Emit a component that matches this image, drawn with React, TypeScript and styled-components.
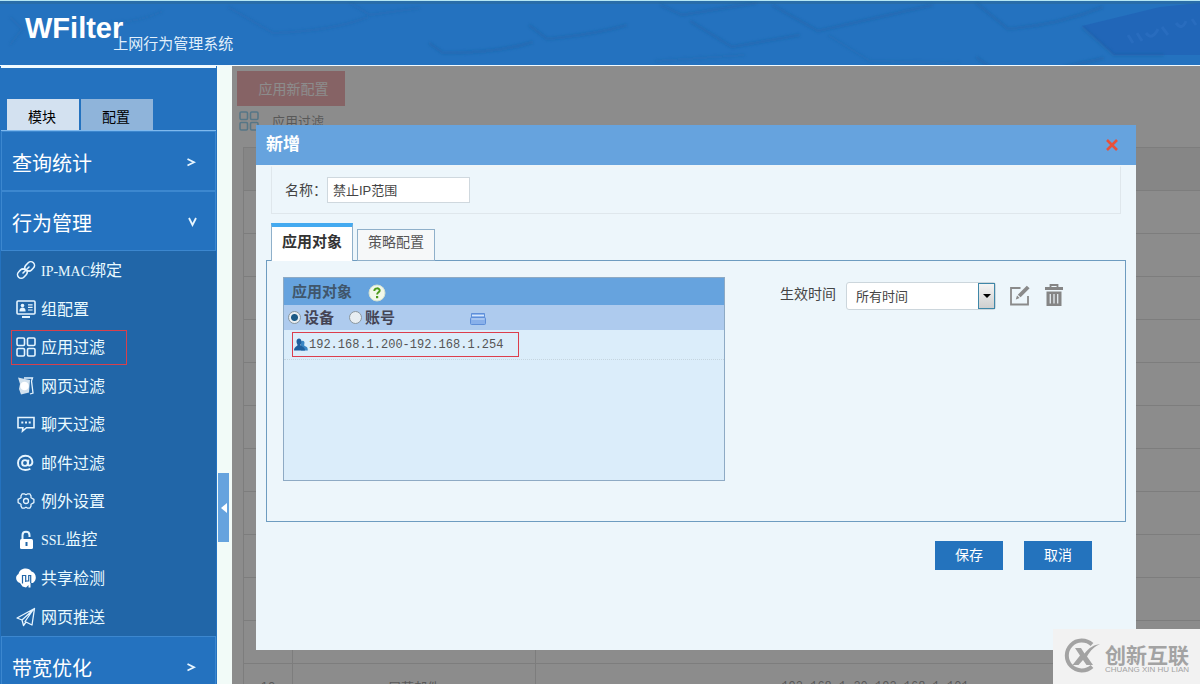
import React from "react";
import styled, { createGlobalStyle, css } from "styled-components";

const sans = `"Liberation Sans", "Noto Sans CJK SC", sans-serif`;

const GlobalStyle = createGlobalStyle`
  *, *::before, *::after { box-sizing: border-box; }
  body { margin: 0; font-family: ${sans}; font-size: 14px; color: #444; }
  button, input, select { font-family: inherit; margin: 0; border-radius: 0; }
  button { cursor: pointer; }
  h1, h2, h3, p, ul { margin: 0; padding: 0; }
`;

/* ---------- page frame ---------- */

const Page = styled.div`
  height: 100vh;
  display: flex;
  flex-direction: column;
  overflow: hidden;
  background: #f2fbf8;
`;

const Header = styled.header`
  position: relative;
  flex: none;
  height: 66px;
  border-top: 1px solid #b4e6f4;
  border-bottom: 1px solid #f2fbff;
  background: #2472bf;
  overflow: hidden;
`;

const HeaderArt = styled.svg`
  position: absolute;
  inset: 0;
  width: 100%;
  height: 100%;
`;

const Brand = styled.div`
  position: relative;
  display: flex;
  align-items: flex-start;
  padding: 10px 0 0 25px;
  color: #fff;
  white-space: nowrap;
`;

const BrandName = styled.h1`
  font-size: 29px;
  line-height: 34px;
  font-weight: bold;
`;

const BrandSub = styled.p`
  margin: 23px 0 0 -10px;
  font-size: 15px;
  line-height: 20px;
  color: #e2f0fc;
`;

const Body = styled.div`
  flex: 1;
  min-height: 0;
  display: flex;
`;

/* ---------- sidebar ---------- */

const Sidebar = styled.nav`
  flex: none;
  width: 217px;
  padding: 0 1px;
  overflow: hidden;
  background: #2472bf;
`;

const SideTabs = styled.div`
  display: flex;
  align-items: flex-end;
  gap: 2px;
  height: 65px;
  padding-left: 6px;
  border-top: 2px solid #f2fbff;
  border-bottom: 1px solid #7fb9ee;
`;

const SideTab = styled.button<{ $active?: boolean }>`
  width: 72px;
  height: 31px;
  padding: 4px 2px 0 0;
  border: 0;
  font-size: 14px;
  line-height: 20px;
  color: #000;
  background: ${(p) => (p.$active ? "#d3e1f0" : "#8fb4da")};
`;

const Section = styled.button`
  width: 100%;
  height: 60px;
  display: flex;
  align-items: center;
  justify-content: space-between;
  padding: 6px 18px 0 10px;
  border: 1px solid #3c87cf;
  color: #fff;
  background: #2472bf;
  font-size: 20px;
  line-height: 28px;

  svg {
    margin-bottom: 5px;
  }
`;

const Menu = styled.ul`
  display: grid;
  grid-template-rows: repeat(5, 38px 39px);
  align-items: center;
  list-style: none;
  background: #2166a8;
`;

const MenuLink = styled.a<{ $marked?: boolean }>`
  display: flex;
  align-items: center;
  gap: 5px;
  width: 116px;
  height: 35px;
  margin-left: 10px;
  padding-left: 4px;
  border: 1px solid ${(p) => (p.$marked ? "#d8404c" : "transparent")};
  color: #eafaff;
  font-size: 16px;
  line-height: 24px;
  text-decoration: none;
  white-space: nowrap;

  span {
    padding-top: 2px;
  }
`;

const Latin = styled.span`
  font-family: "Liberation Serif", serif;
  font-size: 14px;
`;

const Gutter = styled.div`
  flex: none;
  width: 15px;
  padding: 407px 3px 0 1px;
  background: #f2fbf8;
`;

const CollapseHandle = styled.button`
  display: flex;
  align-items: center;
  justify-content: flex-end;
  width: 11px;
  height: 69px;
  padding: 0 2px;
  border: 0;
  background: #66a3de;
`;

/* ---------- content behind the dialog ---------- */

const Main = styled.main`
  position: relative;
  flex: 1;
  min-width: 0;
  overflow: hidden;
  padding: 5px 0 0 5px;
  background: #fff;
`;

const ApplyButton = styled.button`
  display: block;
  width: 108px;
  height: 35px;
  padding: 0 0 2px 5px;
  border: 0;
  color: #fff;
  background: #e65e66;
  font-size: 14px;
`;

const PageTitle = styled.div`
  display: flex;
  align-items: center;
  gap: 13px;
  padding: 4px 0 15px 2px;
  font-size: 13px;
  line-height: 20px;
  color: #333;

  h2 {
    padding-top: 2px;
    font: inherit;
  }
`;

const RuleTable = styled.table`
  width: calc(100% - 6px + 15px);
  margin-left: 6px;
  border-collapse: collapse;
  table-layout: fixed;
  font-size: 13px;
  color: #333;

  th,
  td {
    height: 43px;
    padding: 2px 0 0;
    border: 1px solid #c4c4c4;
    text-align: center;
  }
  th {
    background: #e8e8e8;
  }
`;

const Mono = styled.span`
  font-family: "Liberation Mono", "Noto Sans CJK SC", monospace;
  font-size: 12px;
`;

/* ---------- dialog ---------- */

const Overlay = styled.div`
  position: absolute;
  inset: 0;
  padding: 59px 64px 0 24px;
  background: rgba(102, 102, 102, 0.75);
`;

const Dialog = styled.section`
  min-height: 525px;
  background: #edf6fb;
`;

const DialogHead = styled.header`
  display: flex;
  align-items: center;
  justify-content: space-between;
  height: 40px;
  padding: 0 16px 0 10px;
  background: #66a3de;
  color: #fff;

  h2 {
    font-size: 17px;
    line-height: 24px;
  }
`;

const CloseButton = styled.button`
  display: flex;
  padding: 2px;
  border: 0;
  background: none;
`;

const DialogBody = styled.div`
  padding: 1px 10px 0;
`;

const NameRow = styled.div`
  display: flex;
  align-items: center;
  height: 48px;
  margin: 0 5px;
  padding-left: 13px;
  border: 1px solid #dfe7ec;
  border-top-color: #f2f5f5;
  line-height: 20px;
`;

const NameLabel = styled.label`
  width: 42px;
  white-space: nowrap;
`;

const NameInput = styled.input`
  width: 143px;
  height: 26px;
  padding: 0 5px 2px;
  border: 1px solid #cfd8de;
  background: #fff;
  color: #444;
  font-size: 13px;
`;

const Tabs = styled.div`
  display: flex;
  align-items: flex-end;
  gap: 4px;
  margin: 9px 5px -1px;
`;

const Tab = styled.button<{ $active?: boolean }>`
  position: relative;
  padding: 0 0 8px;
  border: 1px solid #8fb0ca;
  color: #555;
  ${(p) =>
    p.$active
      ? css`
          width: 82px;
          height: 38px;
          border-top: 4px solid #44aaf0;
          border-bottom: 0;
          background: #fff;
          color: #333;
          font-size: 15px;
          font-weight: bold;
        `
      : css`
          width: 78px;
          height: 32px;
          background: #f6f8f9;
          font-size: 14px;
        `}
`;

const Panel = styled.div`
  display: flex;
  align-items: flex-start;
  gap: 55px;
  min-height: 262px;
  padding: 16px;
  border: 1px solid #6e9cc0;
`;

const TargetBox = styled.div`
  width: 442px;
  min-height: 204px;
  border: 1px solid #8eaac4;
  background: #dbedfa;
`;

const TargetHead = styled.div`
  display: flex;
  align-items: center;
  gap: 16px;
  height: 27px;
  padding-left: 8px;
  background: #66a3de;
  color: #40566b;

  h3 {
    font-size: 15px;
    line-height: 22px;
  }
  svg {
    margin-top: 3px;
  }
`;

const TargetKinds = styled.div`
  display: flex;
  align-items: center;
  height: 25px;
  padding-left: 4px;
  background: #aecbee;
`;

const Kind = styled.label`
  display: flex;
  align-items: center;
  gap: 3px;
  width: 61px;
  color: #445;
  font-size: 15px;
  font-weight: bold;
  line-height: 22px;
`;

const Radio = styled.input`
  appearance: none;
  flex: none;
  width: 13px;
  height: 13px;
  border: 1px solid #8b979f;
  border-radius: 50%;
  background: #e8eef2;

  &:checked {
    background: radial-gradient(circle, #1c5a86 0 3px, #e8eef2 4px);
  }
`;

const FolderButton = styled.button`
  display: flex;
  margin-left: 60px;
  padding: 2px 0 0;
  border: 0;
  background: none;
`;

const TargetRow = styled.div`
  padding: 2px 8px;
  border-bottom: 1px dotted #c5d5e0;
`;

const TargetMark = styled.div`
  display: flex;
  align-items: center;
  gap: 1px;
  width: 227px;
  height: 25px;
  padding-left: 1px;
  border: 1px solid #dc3e4c;
  color: #555;
`;

const TimeRow = styled.div`
  display: flex;
  align-items: center;
  padding-top: 5px;

  label {
    margin: -5px 10px 0 0;
    line-height: 20px;
  }
`;

const SelectWrap = styled.div`
  position: relative;
  margin-right: 14px;
`;

const TimeSelect = styled.select`
  appearance: none;
  display: block;
  width: 150px;
  height: 28px;
  padding: 0 24px 0 9px;
  border: 1px solid #ccd6dc;
  border-radius: 3px;
  background: #fff;
  color: #444;
  font-size: 13px;
`;

const SelectArrow = styled.span`
  position: absolute;
  top: 1px;
  right: 1px;
  bottom: 1px;
  width: 17px;
  display: flex;
  align-items: center;
  justify-content: center;
  border: 1px solid #3f87a8;
  background: linear-gradient(#f4f4f4, #cfcfcf);
  pointer-events: none;
`;

const IconButton = styled.button`
  display: flex;
  margin-right: 15px;
  padding: 0 0 2px;
  border: 0;
  background: none;
`;

const Actions = styled.div`
  display: flex;
  justify-content: flex-end;
  gap: 21px;
  padding: 19px 34px 0;
`;

const ActionButton = styled.button`
  width: 68px;
  height: 29px;
  padding: 0 0 3px;
  border: 0;
  background: #2473bd;
  color: #fff;
  font-size: 14px;
`;

/* ---------- site mark ---------- */

const SiteMark = styled.aside`
  position: fixed;
  right: 0;
  bottom: 0;
  display: flex;
  gap: 4px;
  padding: 9px 10px 9px 11px;
  width: 147px;
  height: 55px;
  background: #f2f2f2;
  color: #a3a3a3;
  white-space: nowrap;
`;

const SiteName = styled.div`
  font-size: 21px;
  font-weight: bold;
  line-height: 36px;

  small {
    display: block;
    margin-top: -9px;
    font-size: 8px;
    font-weight: normal;
    line-height: 10px;
  }
`;

/* ---------- icons ---------- */

const Icon = ({ children }: { children: React.ReactNode }) => (
  <svg width="20" height="20" viewBox="0 0 20 20" fill="none" stroke="#e6f5ff" strokeWidth="1.6" aria-hidden="true">
    {children}
  </svg>
);

const GridShapes = () => (
  <>
    <rect x="1" y="1" width="7.5" height="7.5" rx="1.2" />
    <rect x="11.5" y="1" width="7.5" height="7.5" rx="1.2" />
    <rect x="1" y="11.5" width="7.5" height="7.5" rx="1.2" />
    <rect x="11.5" y="11.5" width="7.5" height="7.5" rx="1.2" />
  </>
);

const LinkIcon = () => (
  <Icon>
    <path
      d="M8.200 9.200l-1-.3a3.600 3.600 0 0 0-2.600 1L2.600 12a3.600 3.600 0 0 0 5.200 5.200l2.400-2.500a3.600 3.600 0 0 0 .6-4.200M11.800 10.800l1 .3a3.600 3.600 0 0 0 2.600-1L17.400 8a3.600 3.600 0 0 0-5.200-5.200L9.800 5.300a3.600 3.600 0 0 0-.6 4.200M7 13l6-6"
      strokeLinecap="round"
    />
  </Icon>
);

const GroupIcon = () => (
  <Icon>
    <rect x="1" y="2" width="18" height="13" rx="1" />
    <path d="M6 18h8" strokeWidth="2" />
    <circle cx="6.5" cy="6.5" r="1.8" fill="#e6f5ff" stroke="none" />
    <path d="M3.4 12.4c0-3 1.2-4 3.1-4s3.1 1 3.1 4z" fill="#e6f5ff" stroke="none" />
    <path d="M12 5.8h4.600M12 8.400h4.600M12 11h4.600" strokeWidth="1.2" />
  </Icon>
);

const PagesIcon = () => (
  <Icon>
    <path d="M8 2h8.500l-1 3 1.500 12-3 1" strokeWidth="1.3" />
    <path d="M2 1.500l4.500 1L14 4l-1 12.500-8 2L3 13l1-5z" fill="#d3e2ee" stroke="none" />
    <circle cx="8.500" cy="10" r="4.300" fill="#fff" stroke="none" />
  </Icon>
);

const ChatIcon = () => (
  <Icon>
    <path d="M2 3.500h16v10.200h-7.500L6.500 17l.4-3.300H2z" />
    <path d="M5.300 8.500h2M9 8.500h2M12.700 8.500h2" strokeWidth="2" />
  </Icon>
);

const AtIcon = () => (
  <Icon>
    <circle cx="9" cy="10" r="2.900" strokeWidth="1.900" />
    <path d="M12.400 6.600l-.6 5c0 1.600 4.600 1.400 4.600-2.600 0-3.800-3-6.200-7-6.200-4.400 0-7.400 3-7.400 7.200 0 4.400 3 7 7.400 7 2 0 3.600-.4 5-1.200" strokeWidth="1.900" />
  </Icon>
);

const GearIcon = () => (
  <Icon>
    <path
      d="M6.200 2.800h2l1.800 1 1.800-1h2l1.200 2.100v1.900l2.900 1.600v3.200L15 13.200v1.900l-1.200 2.100h-2l-1.800-1-1.800 1h-2L5 15.100v-1.900l-2.900-1.600V8.400L5 6.800V4.900z"
      strokeWidth="1.300"
      strokeLinejoin="round"
    />
    <circle cx="10" cy="10" r="2.500" strokeWidth="1.300" />
  </Icon>
);

const LockIcon = () => (
  <Icon>
    <path d="M6.500 9.500V5.200c0-4.600 7-4.600 7 0V7" strokeWidth="2" />
    <rect x="4" y="9" width="13" height="10" rx="1.500" fill="#fff" stroke="none" />
    <path d="M10.500 12v4" stroke="#2166a8" strokeWidth="2" />
  </Icon>
);

const ShareIcon = () => (
  <Icon>
    <path d="M4 15C-.8 14-1 7.500 2.500 6 4-.5 13-1 15.500 3.500c4.800 1 6 8.500 1.500 11.500h-2.500v4.500h-2V17L10 19.500 6.500 18.500z" fill="#fff" stroke="none" />
    <path d="M6.500 15.500V7.500h3.200V14M9.700 13h3V7.500h2V15" stroke="#2166a8" strokeWidth="1.200" />
  </Icon>
);

const PlaneIcon = () => (
  <Icon>
    <path d="M18.500 1.500L1 11l5 2 11-10-8 11.500 7 3.500zM6 13l1.500 5.500L10 15" strokeWidth="1.300" strokeLinejoin="round" />
  </Icon>
);

const Chevron = ({ down }: { down?: boolean }) => (
  <svg width="12" height="12" viewBox="0 0 12 12" fill="none" stroke="#e8f6ff" strokeWidth="1.800" aria-hidden="true">
    <path d={down ? "M4 2l3.500 7L11 2" : "M2.500 3l6.500 3.300L2.500 9.500"} />
  </svg>
);

const menuItems: { label: React.ReactNode; icon: React.ReactNode; marked?: boolean }[] = [
  { label: <><Latin>IP-MAC</Latin>绑定</>, icon: <LinkIcon /> },
  { label: "组配置", icon: <GroupIcon /> },
  { label: "应用过滤", icon: <Icon><GridShapes /></Icon>, marked: true },
  { label: "网页过滤", icon: <PagesIcon /> },
  { label: "聊天过滤", icon: <ChatIcon /> },
  { label: "邮件过滤", icon: <AtIcon /> },
  { label: "例外设置", icon: <GearIcon /> },
  { label: <><Latin>SSL</Latin>监控</>, icon: <LockIcon /> },
  { label: "共享检测", icon: <ShareIcon /> },
  { label: "网页推送", icon: <PlaneIcon /> },
];

const emptyRows = Array.from({ length: 11 }, (_, i) => i);

export default function App() {
  return (
    <Page>
      <GlobalStyle />
      <Header>
        <HeaderArt viewBox="0 0 1200 64" preserveAspectRatio="xMaxYMid slice" aria-hidden="true">
          <defs>
            <filter id="soft" x="-5%" y="-20%" width="110%" height="140%">
              <feGaussianBlur stdDeviation="1.400" />
            </filter>
          </defs>
          <rect width="1200" height="3" fill="#2c6b9f" opacity=".7" />
          <path d="M1082 25l78-19 40-4v52h-86z" fill="#2063b6" opacity=".8" />
          <g fill="none" stroke="#1d5795" strokeWidth="3" strokeOpacity=".32" filter="url(#soft)">
            <path d="M10 16l12 12-12 16M110 22q30-1 53-12" strokeOpacity=".16" />
            <path d="M228 6l45 26q60-2 95-16M350 2l20 12 50-7" strokeOpacity=".2" />
            <path d="M429 42l14 10q55 0 90-11M529 24l18 14q50-5 80-14" />
            <path d="M660 4l22 10 75-12M690 20l42 26 68-12M772 4l46 26 115-26" />
            <path d="M655 60l90-6M828 34l42 26 90 2" strokeOpacity=".18" />
            <path d="M976 2l32 26q50-4 95-22M1082 26l32 28h50M976 56l14 10M1064 66l40-9" />
          </g>
          <g stroke="#2f72c4" strokeWidth="3" fill="none" opacity=".5">
            <path d="M1128 34l5 8M1137 32l5 8M1146 32q6 8 12-4M1162 26l6 8M1176 22q6 8 10-2M1192 18l4 6" />
          </g>
        </HeaderArt>
        <Brand>
          <BrandName>WFilter</BrandName>
          <BrandSub>上网行为管理系统</BrandSub>
        </Brand>
      </Header>

      <Body>
        <Sidebar>
          <SideTabs>
            <SideTab $active>模块</SideTab>
            <SideTab>配置</SideTab>
          </SideTabs>
          <Section>查询统计<Chevron /></Section>
          <Section>行为管理<Chevron down /></Section>
          <Menu>
            {menuItems.map((item, i) => (
              <li key={i}>
                <MenuLink href="#" $marked={item.marked}>
                  {item.icon}
                  <span>{item.label}</span>
                </MenuLink>
              </li>
            ))}
          </Menu>
          <Section>带宽优化<Chevron /></Section>
        </Sidebar>

        <Gutter>
          <CollapseHandle aria-label="collapse">
            <svg width="6" height="10" viewBox="0 0 6 10" aria-hidden="true">
              <path d="M6 0v10L0 5z" fill="#fff" />
            </svg>
          </CollapseHandle>
        </Gutter>

        <Main>
          <ApplyButton>应用新配置</ApplyButton>
          <PageTitle>
            <svg width="20" height="20" viewBox="0 0 20 20" fill="none" stroke="#2aa8e8" strokeWidth="1.600" aria-hidden="true">
              <GridShapes />
            </svg>
            <h2>应用过滤</h2>
          </PageTitle>
          <RuleTable>
            <colgroup>
              <col style={{ width: 49 }} />
              <col style={{ width: 243 }} />
              <col />
            </colgroup>
            <thead>
              <tr><th /><th /><th /></tr>
            </thead>
            <tbody>
              {emptyRows.map((i) => (
                <tr key={i}><td /><td /><td /></tr>
              ))}
              <tr>
                <td>10</td>
                <td>屏蔽邮件</td>
                <td><Mono>192.168.1.20-192.168.1.101</Mono></td>
              </tr>
            </tbody>
          </RuleTable>

          <Overlay>
            <Dialog role="dialog" aria-labelledby="dialog-title">
              <DialogHead>
                <h2 id="dialog-title">新增</h2>
                <CloseButton aria-label="close">
                  <svg width="12" height="12" viewBox="0 0 12 12" fill="none" stroke="#e8503a" strokeWidth="2.600">
                    <path d="M1 1l10 10M11 1L1 11" />
                  </svg>
                </CloseButton>
              </DialogHead>
              <DialogBody>
                <NameRow>
                  <NameLabel htmlFor="rule-name">名称：</NameLabel>
                  <NameInput id="rule-name" defaultValue="禁止IP范围" />
                </NameRow>
                <Tabs role="tablist">
                  <Tab role="tab" aria-selected="true" $active>应用对象</Tab>
                  <Tab role="tab" aria-selected="false">策略配置</Tab>
                </Tabs>
                <Panel>
                  <TargetBox>
                    <TargetHead>
                      <h3>应用对象</h3>
                      <svg width="18" height="18" viewBox="0 0 18 18" aria-hidden="true">
                        <circle cx="9" cy="9" r="8" fill="#f2f8ea" stroke="#d5e2d0" />
                        <path d="M6.300 7c0-3.600 5.600-3.400 5.400-.4-.1 1.800-2.600 1.800-2.600 4" fill="none" stroke="#4d9a1c" strokeWidth="1.900" />
                        <rect x="8" y="12" width="2.200" height="2.200" fill="#4d9a1c" />
                      </svg>
                    </TargetHead>
                    <TargetKinds>
                      <Kind><Radio type="radio" name="kind" defaultChecked />设备</Kind>
                      <Kind><Radio type="radio" name="kind" />账号</Kind>
                      <FolderButton aria-label="browse">
                        <svg width="16" height="12" viewBox="0 0 16 12" aria-hidden="true">
                          <path d="M1.500 5V.5h13V5" fill="#8db5ee" stroke="#5f8fd8" />
                          <path d="M2 2.500h12" stroke="#d5e6fb" />
                          <rect x=".5" y="4.500" width="15" height="7" rx="1" fill="#88b0ea" stroke="#5f8fd8" />
                          <path d="M1.500 6h13" stroke="#c4dbf8" />
                        </svg>
                      </FolderButton>
                    </TargetKinds>
                    <TargetRow>
                      <TargetMark>
                        <svg width="14" height="14" viewBox="0 0 14 14" aria-hidden="true">
                          <path d="M7 3.500c2-2 4.300 0 3.300 2.500-.3 1.500 0 2 1.500 2.500 1.500.6 2 1.500 2 4H7z" fill="#3b86c4" />
                          <path d="M2.500 3.500c0-4 5-4 5 0 0 2-1 2.500-1 3.500 0 1.500 4.500 1 4.500 5.500H0c0-4 3.500-4 3.500-5.500 0-1-1-1.500-1-3.500z" fill="#1f5f9e" />
                        </svg>
                        <Mono>192.168.1.200-192.168.1.254</Mono>
                      </TargetMark>
                    </TargetRow>
                  </TargetBox>

                  <TimeRow>
                    <label htmlFor="active-time">生效时间</label>
                    <SelectWrap>
                      <TimeSelect id="active-time" defaultValue="all">
                        <option value="all">所有时间</option>
                      </TimeSelect>
                      <SelectArrow>
                        <svg width="8" height="4" viewBox="0 0 8 4" aria-hidden="true">
                          <path d="M0 0h8L4 4z" fill="#000" />
                        </svg>
                      </SelectArrow>
                    </SelectWrap>
                    <IconButton aria-label="edit">
                      <svg width="20" height="21" viewBox="0 0 20 21" aria-hidden="true">
                        <path d="M10.500 3H1v16.500h17V11" fill="none" stroke="#8a8a8a" strokeWidth="1.800" />
                        <path d="M16.800.8l2.800 2.400-9 9-2.800-2.500zM7 10.600l2.600 2.400-3.800 1.500z" fill="#8a8a8a" />
                      </svg>
                    </IconButton>
                    <IconButton aria-label="delete">
                      <svg width="18" height="22" viewBox="0 0 18 22" aria-hidden="true">
                        <path d="M5.500 3V1h7v2" fill="none" stroke="#858585" strokeWidth="1.800" />
                        <path d="M0 3h18v3H0zM1.500 7.500h15V22h-15z" fill="#858585" />
                        <path d="M5.300 10v9.500M9 10v9.500M12.700 10v9.500" stroke="#e4ecf0" strokeWidth="1.300" />
                      </svg>
                    </IconButton>
                  </TimeRow>
                </Panel>
                <Actions>
                  <ActionButton>保存</ActionButton>
                  <ActionButton>取消</ActionButton>
                </Actions>
              </DialogBody>
            </Dialog>
          </Overlay>
        </Main>
      </Body>

      <SiteMark>
        <svg width="37" height="36" viewBox="0 0 37 36" aria-hidden="true">
          <path d="M28 6.500A15 15 0 1 0 28 28.500" fill="none" stroke="#a3a3a3" strokeWidth="4" />
          <path d="M11 10h6l3.500 5.500C25 9.500 30 7 36 6c-5 2.500-9.500 6-13 12.500L29 27h-6.500L19 22l-4.500 5H8.500l7.500-9.500z" fill="#a3a3a3" />
        </svg>
        <SiteName>
          创新互联
          <small>CHUANG XIN HU LIAN</small>
        </SiteName>
      </SiteMark>
    </Page>
  );
}
